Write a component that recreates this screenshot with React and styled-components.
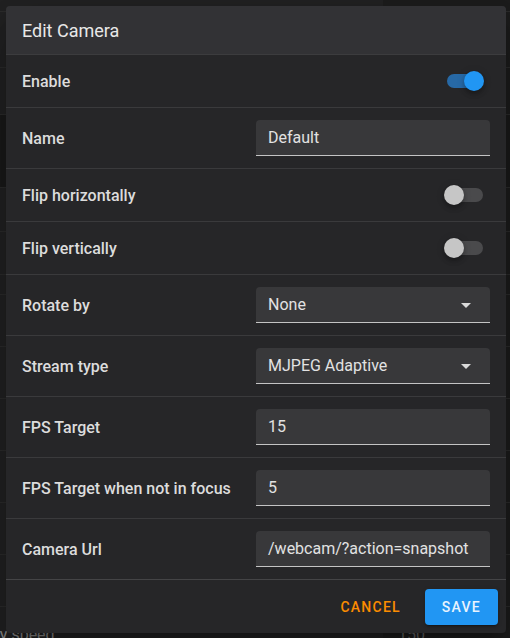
import React from 'react';
import styled, { createGlobalStyle } from 'styled-components';

const Global = createGlobalStyle`
  html, body { margin: 0; padding: 0; background: #1c1c1c; }
  body { font-family: Roboto, "Noto Sans", "Liberation Sans", sans-serif; -webkit-font-smoothing: antialiased; }
  #root { width: 510px; height: 638px; overflow: hidden; position: relative; }
`;

/* ---------- background page (behind the dialog scrim) ---------- */
const Page = styled.div`
  width: 510px;
  height: 638px;
  display: grid;
  grid-template-columns: 383px 1fr;
  background: #1d1d1d;
  overflow: hidden;
`;

const BackColumn = styled.div`
  display: flex;
  flex-direction: column;
  background: ${p => (p.$panel ? '#222223' : '#1d1d1d')};
`;

const BackRow = styled.div`
  flex: none;
  height: ${p => p.$h}px;
  box-sizing: border-box;
  border-bottom: 1px solid #2c2c2c;
  background: ${p => (p.$dark ? '#1a1a1a' : 'transparent')};
`;

const BackLast = styled.div`
  padding: 16px 15px 0;
  font-size: 16px;
  line-height: 24px;
  white-space: nowrap;
  color: ${p => (p.$dim ? '#666' : '#8a8a8a')};
`;

const BackLabel = styled.span`
  display: inline-block;
  margin-left: -64px;
`;

/* ---------- dialog ---------- */
const Dialog = styled.div`
  position: absolute;
  top: 6px;
  left: 6px;
  width: 500px;
  background: #262628;
  border-radius: 4px;
  overflow: hidden;
  box-shadow: 0 11px 15px -7px rgba(0, 0, 0, 0.25), 0 24px 38px 3px rgba(0, 0, 0, 0.16),
    0 9px 46px 8px rgba(0, 0, 0, 0.14);
`;

const Header = styled.div`
  height: 48px;
  display: flex;
  align-items: center;
  padding: 0 16px;
  background: #323235;
  border-bottom: 1px solid #3c3c3e;
  font-size: 18px;
  font-weight: 400;
  color: #e8e8e8;
`;

const Row = styled.div`
  display: flex;
  align-items: center;
  justify-content: space-between;
  padding: 0 16px;
  height: ${p => (p.$tall ? 60 : 52)}px;
  border-bottom: 1px solid ${p => (p.$last ? '#444446' : '#3a3a3c')};
`;

const Label = styled.div`
  font-size: 16px;
  font-weight: 500;
  color: #dcdcdc;
`;

const Field = styled.div`
  box-sizing: border-box;
  width: 234px;
  height: 36px;
  display: flex;
  align-items: center;
  justify-content: space-between;
  padding: 0 12px;
  background: #38383a;
  border-radius: 4px 4px 0 0;
  border-bottom: 1px solid #c4c4c4;
  font-size: 16px;
  color: #e2e2e2;
`;

const Caret = styled.svg`
  width: 24px;
  height: 24px;
  flex: none;
  fill: #dadada;
`;

const SwitchWrap = styled.div`
  position: relative;
  width: 40px;
  height: 20px;
  margin-right: 6px;
`;

const Track = styled.div`
  position: absolute;
  left: 3px;
  top: 3px;
  width: 36px;
  height: 14px;
  border-radius: 7px;
  background: ${p => (p.$on ? '#2769a6' : '#4a4a4c')};
`;

const Thumb = styled.div`
  position: absolute;
  top: 0;
  left: ${p => (p.$on ? 20 : 0)}px;
  width: 20px;
  height: 20px;
  border-radius: 50%;
  background: ${p => (p.$on ? '#2196f3' : '#c6c6c6')};
  box-shadow: 0 2px 4px -1px rgba(0, 0, 0, 0.2), 0 4px 5px 0 rgba(0, 0, 0, 0.14),
    0 1px 10px 0 rgba(0, 0, 0, 0.12);
`;

const Footer = styled.div`
  display: flex;
  justify-content: flex-end;
  align-items: center;
  gap: 8px;
  padding: 9px 8px 8px;
`;

const Button = styled.button`
  height: 36px;
  padding: 0 ${p => (p.$primary ? 17 : 16)}px;
  border: none;
  border-radius: 4px;
  font-family: inherit;
  font-size: 14px;
  font-weight: 500;
  letter-spacing: 1.25px;
  text-transform: uppercase;
  cursor: pointer;
  color: ${p => (p.$primary ? '#e8f3fe' : '#fb8c00')};
  background: ${p => (p.$primary ? '#2196f3' : 'transparent')};
  box-shadow: ${p =>
    p.$primary
      ? '0 3px 1px -2px rgba(0,0,0,.2), 0 2px 2px 0 rgba(0,0,0,.14), 0 1px 5px 0 rgba(0,0,0,.12)'
      : 'none'};
`;

const Switch = ({ on }) => (
  <SwitchWrap>
    <Track $on={on} />
    <Thumb $on={on} />
  </SwitchWrap>
);

const CaretIcon = () => (
  <Caret viewBox="0 0 24 24">
    <path d="M7 10l5 5 5-5z" />
  </Caret>
);

const rows = [
  { label: 'Enable', type: 'switch', on: true },
  { label: 'Name', type: 'input', value: 'Default' },
  { label: 'Flip horizontally', type: 'switch', on: false },
  { label: 'Flip vertically', type: 'switch', on: false },
  { label: 'Rotate by', type: 'select', value: 'None' },
  { label: 'Stream type', type: 'select', value: 'MJPEG Adaptive' },
  { label: 'FPS Target', type: 'input', value: '15' },
  { label: 'FPS Target when not in focus', type: 'input', value: '5' },
  { label: 'Camera Url', type: 'input', value: '/webcam/?action=snapshot' },
];

const backRows = [12, 56, 47, 73, 44, 43, 20, 52, 52, 52, 52, 52, 52];

export default function App() {
  return (
    <>
      <Global />
      <Page>
        <BackColumn $panel>
          {backRows.map((h, i) => (
            <BackRow key={i} $h={h} $dark={i === 3} />
          ))}
          <BackLast>
            <BackLabel>Velocity speed</BackLabel>
          </BackLast>
        </BackColumn>
        <BackColumn>
          {backRows.map((h, i) => (
            <BackRow key={i} $h={h} $dark={i === 3} />
          ))}
          <BackLast $dim>150</BackLast>
        </BackColumn>
      </Page>

      <Dialog>
        <Header>Edit Camera</Header>
        {rows.map((r, i) => (
          <Row key={r.label} $tall={r.type !== 'switch'} $last={i === rows.length - 1}>
            <Label>{r.label}</Label>
            {r.type === 'switch' && <Switch on={r.on} />}
            {r.type === 'input' && <Field>{r.value}</Field>}
            {r.type === 'select' && (
              <Field>
                <span>{r.value}</span>
                <CaretIcon />
              </Field>
            )}
          </Row>
        ))}
        <Footer>
          <Button>Cancel</Button>
          <Button $primary>Save</Button>
        </Footer>
      </Dialog>
    </>
  );
}
